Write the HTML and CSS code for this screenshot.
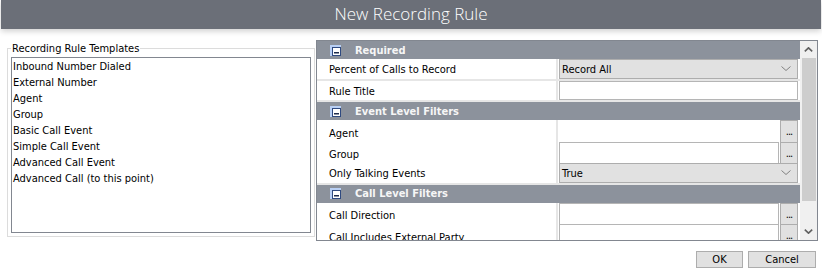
FILE: index.html
```html
<!DOCTYPE html>
<html lang="en">
<head>
    <meta charset="UTF-8">
    <title>New Recording Rule</title>
    <link rel="stylesheet" href="styles.css">
</head>
<body>
    <div class="titlebar">New Recording Rule</div>

    <div class="content">
        <fieldset class="templates">
            <legend>Recording Rule Templates</legend>
            <ul class="listbox">
                <li>Inbound Number Dialed</li>
                <li>External Number</li>
                <li>Agent</li>
                <li>Group</li>
                <li>Basic Call Event</li>
                <li>Simple Call Event</li>
                <li>Advanced Call Event</li>
                <li>Advanced Call (to this point)</li>
            </ul>
        </fieldset>

        <div class="propgrid">
            <div class="rows">
                <div class="cat"><svg class="toggle" width="11" height="11" viewBox="0 0 11 11"><rect x="0" y="0" width="11" height="11" fill="#b9d0f5"/><rect x="2.5" y="2.5" width="8" height="8" fill="#fff" stroke="#2f4a80"/><rect x="4" y="7" width="5" height="1.5" fill="#1c2b4d"/></svg>Required</div>
                <div class="prop">
                    <div class="label">Percent of Calls to Record</div>
                    <div class="value"><div class="combo">Record All<svg class="chev" width="10" height="5" viewBox="0 0 10 5"><polyline points="0.5,0.5 5,4.5 9.5,0.5" fill="none" stroke="#808080"/></svg></div></div>
                </div>
                <div class="prop">
                    <div class="label">Rule Title</div>
                    <div class="value"><div class="input"></div></div>
                </div>

                <div class="cat"><svg class="toggle" width="11" height="11" viewBox="0 0 11 11"><rect x="0" y="0" width="11" height="11" fill="#b9d0f5"/><rect x="2.5" y="2.5" width="8" height="8" fill="#fff" stroke="#2f4a80"/><rect x="4" y="7" width="5" height="1.5" fill="#1c2b4d"/></svg>Event Level Filters</div>
                <div class="prop">
                    <div class="label">Agent</div>
                    <div class="value"><div class="input bare"></div><div class="dots">...</div></div>
                </div>
                <div class="prop">
                    <div class="label">Group</div>
                    <div class="value"><div class="input"></div><div class="dots">...</div></div>
                </div>
                <div class="prop">
                    <div class="label">Only Talking Events</div>
                    <div class="value"><div class="combo">True<svg class="chev" width="10" height="5" viewBox="0 0 10 5"><polyline points="0.5,0.5 5,4.5 9.5,0.5" fill="none" stroke="#808080"/></svg></div></div>
                </div>

                <div class="cat"><svg class="toggle" width="11" height="11" viewBox="0 0 11 11"><rect x="0" y="0" width="11" height="11" fill="#b9d0f5"/><rect x="2.5" y="2.5" width="8" height="8" fill="#fff" stroke="#2f4a80"/><rect x="4" y="7" width="5" height="1.5" fill="#1c2b4d"/></svg>Call Level Filters</div>
                <div class="prop">
                    <div class="label">Call Direction</div>
                    <div class="value"><div class="input"></div><div class="dots">...</div></div>
                </div>
                <div class="prop">
                    <div class="label">Call Includes External Party</div>
                    <div class="value"><div class="input"></div><div class="dots">...</div></div>
                </div>
            </div>

            <div class="vscroll">
                <div class="arrow"><svg width="9" height="5" viewBox="0 0 9 5"><polyline points="0.8,4.3 4.5,0.8 8.2,4.3" fill="none" stroke="#606060" stroke-width="1.6"/></svg></div>
                <div class="thumb"></div>
                <div class="track"></div>
                <div class="arrow"><svg width="9" height="5" viewBox="0 0 9 5"><polyline points="0.8,0.7 4.5,4.2 8.2,0.7" fill="none" stroke="#606060" stroke-width="1.6"/></svg></div>
            </div>
        </div>
    </div>

    <div class="actions">
        <button class="ok">OK</button>
        <button class="cancel">Cancel</button>
    </div>
</body>
</html>
```

FILE: styles.css
```css
body {
    margin: 0;
    width: 822px;
    height: 280px;
    background: #fff;
    font-family: "DejaVu Sans Condensed", "Liberation Sans", sans-serif;
    font-size: 11px;
    color: #000;
    overflow: hidden;
}
.titlebar {
    height: 29px;
    line-height: 28px;
    margin: 0 1px;
    background: #6b6f78;
    color: #fff;
    text-align: center;
    font-family: "Open Sans", sans-serif;
    font-size: 17px;
    font-weight: 300;
    box-shadow: 0 2px 6px rgba(0, 0, 0, 0.2);
}
.content {
    display: flex;
    align-items: flex-start;
    gap: 1px;
    padding: 11px 0 0 7px;
}
.templates {
    box-sizing: border-box;
    width: 308px;
    margin: 2px 0 0;
    padding: 2px 3px 3px;
    border: 1px solid #dcdcdc;
}
.templates legend {
    padding: 0 1px;
    line-height: 13px;
}
.listbox {
    box-sizing: border-box;
    height: 176px;
    margin: 0;
    padding: 1px 1px 0;
    list-style: none;
    border: 1px solid #828790;
}
.listbox li {
    line-height: 16px;
    white-space: nowrap;
}
.propgrid {
    box-sizing: border-box;
    width: 502px;
    height: 201px;
    display: flex;
    border: 1px solid #828790;
    overflow: hidden;
}
.rows {
    flex: 1;
    overflow: hidden;
}
.cat {
    height: 18px;
    display: flex;
    align-items: center;
    background: #8c929c;
    color: #f6f6f6;
    font-weight: bold;
}
.toggle {
    margin: 0 14px 0 13px;
}
.prop {
    box-sizing: border-box;
    height: 21.5px;
    display: grid;
    grid-template-columns: 239px 1fr;
    column-gap: 2px;
    padding-bottom: 2px;
    background: #e6e6e6;
}
.label {
    background: #fff;
    padding: 2px 0 0 12px;
    display: flex;
    align-items: center;
}
.value {
    background: #fff;
    display: flex;
    gap: 1px;
    padding: 0 2px 0 1px;
}
.combo {
    flex: 1;
    box-sizing: border-box;
    display: flex;
    align-items: center;
    justify-content: space-between;
    padding: 2px 6px 0 2px;
    background: #e1e1e1;
    border: 1px solid #adadad;
}
.chev {
    margin-top: -2px;
}
.input {
    flex: 1;
    box-sizing: border-box;
    border: 1px solid #b5b5b5;
    background: #fff;
}
.input.bare {
    border-color: #fff;
}
.dots {
    box-sizing: border-box;
    width: 18px;
    background: #e1e1e1;
    border: 1px solid #adadad;
    text-align: center;
    line-height: 22px;
    font-size: 11px;
    letter-spacing: -1px;
}
.vscroll {
    width: 17px;
    display: flex;
    flex-direction: column;
    background: #f0f0f0;
}
.arrow {
    height: 17px;
    display: flex;
    align-items: center;
    justify-content: center;
}
.thumb {
    height: 143px;
    margin: 0 1px 0 2px;
    background: #cdcdcd;
}
.track {
    flex: 1;
}
.actions {
    display: flex;
    justify-content: flex-end;
    gap: 5px;
    padding: 10px 6px 0 0;
}
.actions button {
    height: 17px;
    padding: 0;
    background: #e1e1e1;
    border: 1px solid #adadad;
    font-family: inherit;
    font-size: 11px;
    color: #000;
}
.ok {
    width: 47px;
}
.cancel {
    width: 68px;
}
```
